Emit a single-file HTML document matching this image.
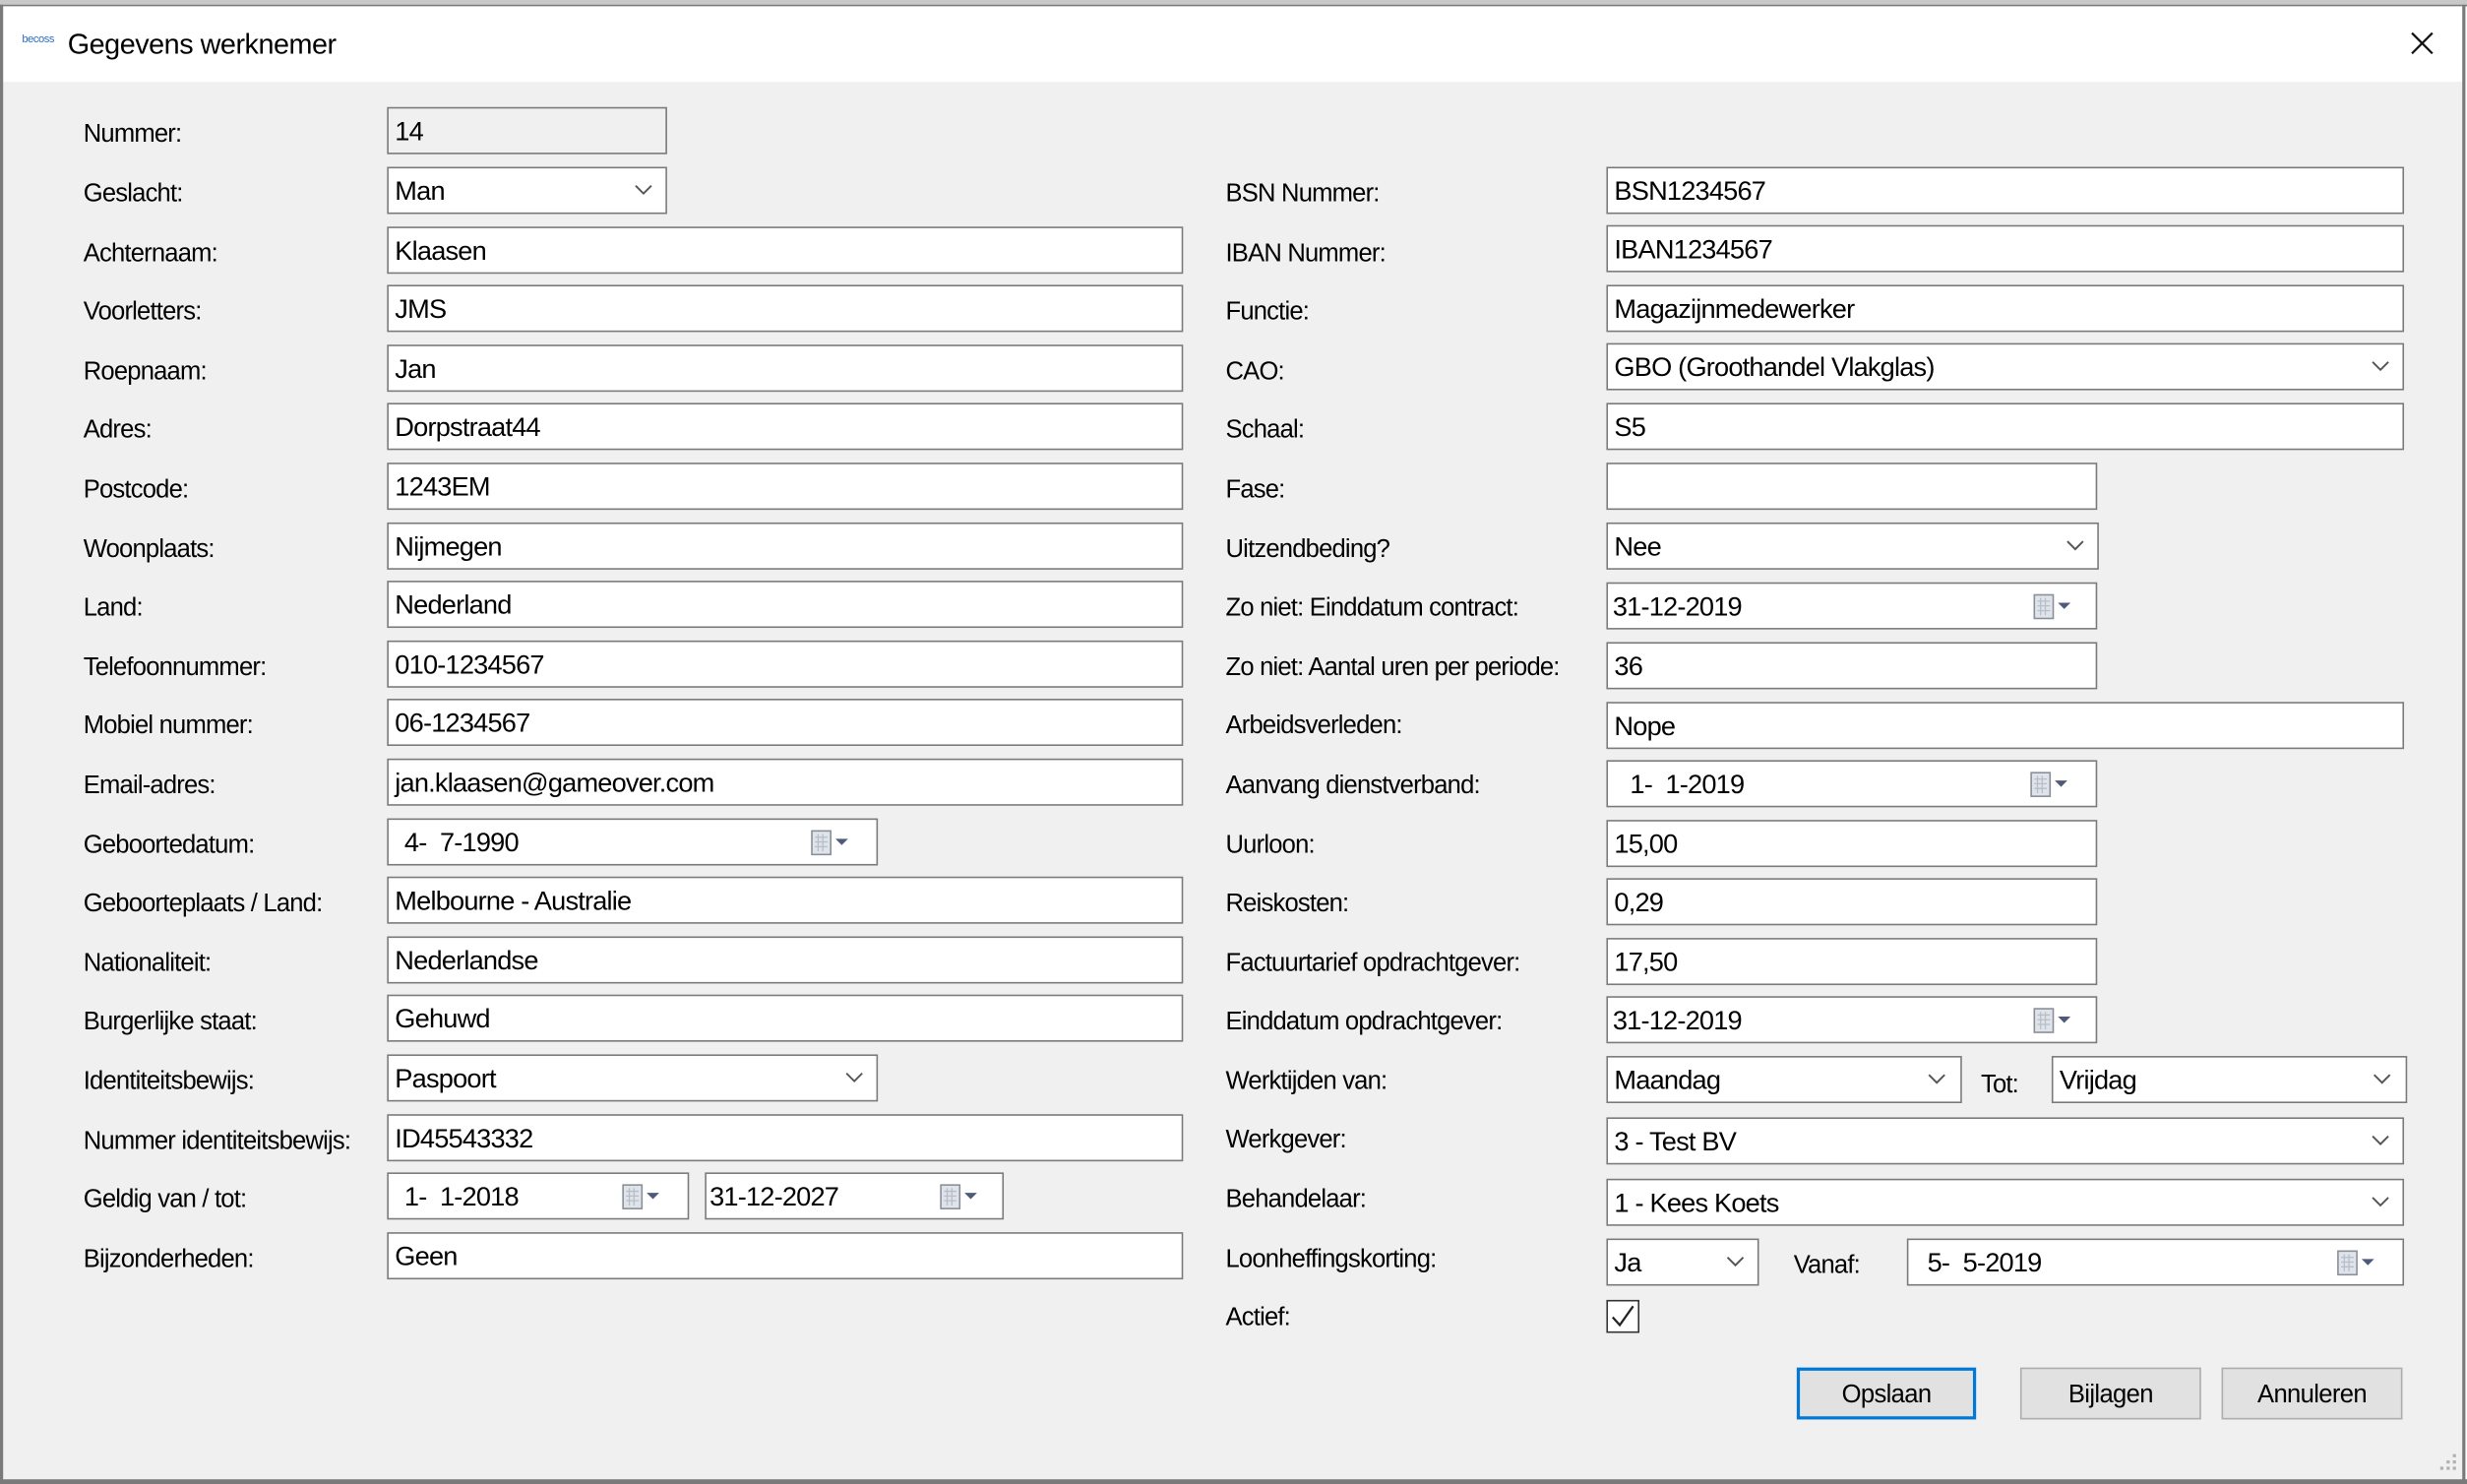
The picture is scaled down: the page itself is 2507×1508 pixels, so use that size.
<!DOCTYPE html>
<html><head><meta charset="utf-8"><style>
html,body{margin:0;padding:0;width:2507px;height:1508px;overflow:hidden;background:#fff}
#s{position:absolute;left:0;top:0;width:1568px;height:943px;transform:scale(1.59885,1.59915);transform-origin:0 0;font-family:"Liberation Sans",sans-serif;color:#000}
.a{position:absolute}
.l{position:absolute;font-size:16px;letter-spacing:-0.5px;line-height:20px;white-space:nowrap;margin-top:2px}
.i{position:absolute;height:28px;background:#fff;border:1px solid #7a7a7a;box-sizing:content-box;font-size:17px;letter-spacing:-0.5px;line-height:30px;padding-left:4px;white-space:nowrap;overflow:hidden}
.i svg{position:absolute;top:0}
.b{position:absolute;height:31px;background:#e1e1e1;border:1px solid #adadad;font-size:16px;letter-spacing:-0.4px;line-height:33px;text-align:center}
</style></head><body><div id="s">
<div class="a" style="left:0;top:0;width:1568px;height:4px;background:#c8c8c8"></div>
<div class="a" style="left:0;top:3px;width:1568px;height:1px;background:#7a7a7a"></div>
<div class="a" style="left:0;top:4px;width:1566px;height:48px;background:#fff"></div>
<div class="a" style="left:0;top:52px;width:1566px;height:888px;background:#f0f0f0"></div>
<div class="a" style="left:0;top:3px;width:2px;height:939px;background:#7a7a7a"></div>
<div class="a" style="left:1565px;top:3px;width:2px;height:939px;background:#7a7a7a"></div>
<div class="a" style="left:0;top:940px;width:1568px;height:3px;background:#7a7a7a"></div>
<div class="a" style="left:14px;top:22px;font-size:7px;color:#2a6fc9;letter-spacing:-0.3px">becoss</div>
<div class="a" style="left:43px;top:18px;font-size:18px;letter-spacing:-0.3px">Gegevens werknemer</div>
<svg class="a" style="left:1532px;top:20px" width="15" height="15"><path d="M1 1L14 14M14 1L1 14" stroke="#111" stroke-width="1.4"/></svg>

<div class="l" style="left:53px;top:74px">Nummer:</div>
<div class="l" style="left:53px;top:112px">Geslacht:</div>
<div class="l" style="left:53px;top:150px">Achternaam:</div>
<div class="l" style="left:53px;top:187px">Voorletters:</div>
<div class="l" style="left:53px;top:225px">Roepnaam:</div>
<div class="l" style="left:53px;top:262px">Adres:</div>
<div class="l" style="left:53px;top:300px">Postcode:</div>
<div class="l" style="left:53px;top:338px">Woonplaats:</div>
<div class="l" style="left:53px;top:375px">Land:</div>
<div class="l" style="left:53px;top:413px">Telefoonnummer:</div>
<div class="l" style="left:53px;top:450px">Mobiel nummer:</div>
<div class="l" style="left:53px;top:488px">Email-adres:</div>
<div class="l" style="left:53px;top:526px">Geboortedatum:</div>
<div class="l" style="left:53px;top:563px">Geboorteplaats / Land:</div>
<div class="l" style="left:53px;top:601px">Nationaliteit:</div>
<div class="l" style="left:53px;top:638px">Burgerlijke staat:</div>
<div class="l" style="left:53px;top:676px">Identiteitsbewijs:</div>
<div class="l" style="left:53px;top:714px">Nummer identiteitsbewijs:</div>
<div class="l" style="left:53px;top:751px">Geldig van / tot:</div>
<div class="l" style="left:53px;top:789px">Bijzonderheden:</div>

<div class="i" style="left:246px;top:68px;width:172px;background:#f0f0f0">14</div>
<div class="i" style="left:246px;top:106px;width:172px">Man<svg style="left:155px" width="16" height="28"><path d="M2 11L7 16L12 11" fill="none" stroke="#555" stroke-width="1.2"/></svg></div>
<div class="i" style="left:246px;top:144px;width:500px">Klaasen</div>
<div class="i" style="left:246px;top:181px;width:500px">JMS</div>
<div class="i" style="left:246px;top:219px;width:500px">Jan</div>
<div class="i" style="left:246px;top:256px;width:500px">Dorpstraat44</div>
<div class="i" style="left:246px;top:294px;width:500px">1243EM</div>
<div class="i" style="left:246px;top:332px;width:500px">Nijmegen</div>
<div class="i" style="left:246px;top:369px;width:500px">Nederland</div>
<div class="i" style="left:246px;top:407px;width:500px">010-1234567</div>
<div class="i" style="left:246px;top:444px;width:500px">06-1234567</div>
<div class="i" style="left:246px;top:482px;width:500px">jan.klaasen@gameover.com</div>
<div class="i" style="left:246px;top:520px;padding-left:10px;width:300px">4-&nbsp; 7-1990<svg style="left:268px" width="30" height="28"><rect x="1" y="7" width="12" height="15" fill="#dfe3ea" stroke="#8a8f98"/><path d="M3 11H11M3 14H11M3 17H11M5 9V20M8 9V20" stroke="#b8bec8" stroke-width="0.8"/><path d="M16 12H24L20 16Z" fill="#4d5b78"/></svg></div>
<div class="i" style="left:246px;top:557px;width:500px">Melbourne - Australie</div>
<div class="i" style="left:246px;top:595px;width:500px">Nederlandse</div>
<div class="i" style="left:246px;top:632px;width:500px">Gehuwd</div>
<div class="i" style="left:246px;top:670px;width:306px">Paspoort<svg style="left:289px" width="16" height="28"><path d="M2 11L7 16L12 11" fill="none" stroke="#555" stroke-width="1.2"/></svg></div>
<div class="i" style="left:246px;top:708px;width:500px">ID45543332</div>
<div class="i" style="left:246px;top:745px;width:180px;padding-left:10px">1-&nbsp; 1-2018<svg style="left:148px" width="30" height="28"><rect x="1" y="7" width="12" height="15" fill="#dfe3ea" stroke="#8a8f98"/><path d="M3 11H11M3 14H11M3 17H11M5 9V20M8 9V20" stroke="#b8bec8" stroke-width="0.8"/><path d="M16 12H24L20 16Z" fill="#4d5b78"/></svg></div>
<div class="i" style="left:448px;top:745px;width:186px;padding-left:2px">31-12-2027<svg style="left:148px" width="30" height="28"><rect x="1" y="7" width="12" height="15" fill="#dfe3ea" stroke="#8a8f98"/><path d="M3 11H11M3 14H11M3 17H11M5 9V20M8 9V20" stroke="#b8bec8" stroke-width="0.8"/><path d="M16 12H24L20 16Z" fill="#4d5b78"/></svg></div>
<div class="i" style="left:246px;top:783px;width:500px">Geen</div>

<div class="l" style="left:779px;top:112px">BSN Nummer:</div>
<div class="l" style="left:779px;top:150px">IBAN Nummer:</div>
<div class="l" style="left:779px;top:187px">Functie:</div>
<div class="l" style="left:779px;top:225px">CAO:</div>
<div class="l" style="left:779px;top:262px">Schaal:</div>
<div class="l" style="left:779px;top:300px">Fase:</div>
<div class="l" style="left:779px;top:338px">Uitzendbeding?</div>
<div class="l" style="left:779px;top:375px">Zo niet: Einddatum contract:</div>
<div class="l" style="left:779px;top:413px">Zo niet: Aantal uren per periode:</div>
<div class="l" style="left:779px;top:450px">Arbeidsverleden:</div>
<div class="l" style="left:779px;top:488px">Aanvang dienstverband:</div>
<div class="l" style="left:779px;top:526px">Uurloon:</div>
<div class="l" style="left:779px;top:563px">Reiskosten:</div>
<div class="l" style="left:779px;top:601px">Factuurtarief opdrachtgever:</div>
<div class="l" style="left:779px;top:638px">Einddatum opdrachtgever:</div>
<div class="l" style="left:779px;top:676px">Werktijden van:</div>
<div class="l" style="left:1259px;top:678px">Tot:</div>
<div class="l" style="left:779px;top:713px">Werkgever:</div>
<div class="l" style="left:779px;top:751px">Behandelaar:</div>
<div class="l" style="left:779px;top:789px">Loonheffingskorting:</div>
<div class="l" style="left:1140px;top:793px">Vanaf:</div>
<div class="l" style="left:779px;top:826px">Actief:</div>

<div class="i" style="left:1021px;top:106px;width:501px">BSN1234567</div>
<div class="i" style="left:1021px;top:143px;width:501px">IBAN1234567</div>
<div class="i" style="left:1021px;top:181px;width:501px">Magazijnmedewerker</div>
<div class="i" style="left:1021px;top:218px;width:501px">GBO (Groothandel Vlakglas)<svg style="left:484px" width="16" height="28"><path d="M2 11L7 16L12 11" fill="none" stroke="#555" stroke-width="1.2"/></svg></div>
<div class="i" style="left:1021px;top:256px;width:501px">S5</div>
<div class="i" style="left:1021px;top:294px;width:306px"></div>
<div class="i" style="left:1021px;top:332px;width:307px">Nee<svg style="left:290px" width="16" height="28"><path d="M2 11L7 16L12 11" fill="none" stroke="#555" stroke-width="1.2"/></svg></div>
<div class="i" style="left:1021px;top:370px;width:307px;padding-left:3px">31-12-2019<svg style="left:270px" width="30" height="28"><rect x="1" y="7" width="12" height="15" fill="#dfe3ea" stroke="#8a8f98"/><path d="M3 11H11M3 14H11M3 17H11M5 9V20M8 9V20" stroke="#b8bec8" stroke-width="0.8"/><path d="M16 12H24L20 16Z" fill="#4d5b78"/></svg></div>
<div class="i" style="left:1021px;top:408px;width:306px">36</div>
<div class="i" style="left:1021px;top:446px;width:501px">Nope</div>
<div class="i" style="left:1021px;top:483px;width:296px;padding-left:14px">1-&nbsp; 1-2019<svg style="left:268px" width="30" height="28"><rect x="1" y="7" width="12" height="15" fill="#dfe3ea" stroke="#8a8f98"/><path d="M3 11H11M3 14H11M3 17H11M5 9V20M8 9V20" stroke="#b8bec8" stroke-width="0.8"/><path d="M16 12H24L20 16Z" fill="#4d5b78"/></svg></div>
<div class="i" style="left:1021px;top:521px;width:306px">15,00</div>
<div class="i" style="left:1021px;top:558px;width:306px">0,29</div>
<div class="i" style="left:1021px;top:596px;width:306px">17,50</div>
<div class="i" style="left:1021px;top:633px;width:307px;padding-left:3px">31-12-2019<svg style="left:270px" width="30" height="28"><rect x="1" y="7" width="12" height="15" fill="#dfe3ea" stroke="#8a8f98"/><path d="M3 11H11M3 14H11M3 17H11M5 9V20M8 9V20" stroke="#b8bec8" stroke-width="0.8"/><path d="M16 12H24L20 16Z" fill="#4d5b78"/></svg></div>
<div class="i" style="left:1021px;top:671px;width:220px">Maandag<svg style="left:202px" width="16" height="28"><path d="M2 11L7 16L12 11" fill="none" stroke="#555" stroke-width="1.2"/></svg></div>
<div class="i" style="left:1304px;top:671px;width:220px">Vrijdag<svg style="left:202px" width="16" height="28"><path d="M2 11L7 16L12 11" fill="none" stroke="#555" stroke-width="1.2"/></svg></div>
<div class="i" style="left:1021px;top:710px;width:501px">3 - Test BV<svg style="left:484px" width="16" height="28"><path d="M2 11L7 16L12 11" fill="none" stroke="#555" stroke-width="1.2"/></svg></div>
<div class="i" style="left:1021px;top:749px;width:501px">1 - Kees Koets<svg style="left:484px" width="16" height="28"><path d="M2 11L7 16L12 11" fill="none" stroke="#555" stroke-width="1.2"/></svg></div>
<div class="i" style="left:1021px;top:787px;width:91px">Ja<svg style="left:74px" width="16" height="28"><path d="M2 11L7 16L12 11" fill="none" stroke="#555" stroke-width="1.2"/></svg></div>
<div class="i" style="left:1212px;top:787px;width:302px;padding-left:12px">5-&nbsp; 5-2019<svg style="left:272px" width="30" height="28"><rect x="1" y="7" width="12" height="15" fill="#dfe3ea" stroke="#8a8f98"/><path d="M3 11H11M3 14H11M3 17H11M5 9V20M8 9V20" stroke="#b8bec8" stroke-width="0.8"/><path d="M16 12H24L20 16Z" fill="#4d5b78"/></svg></div>
<div class="a" style="left:1021px;top:826px;width:19px;height:19px;background:#fff;border:1px solid #333"></div>
<svg class="a" style="left:1021px;top:826px" width="21" height="21"><path d="M4 11L8.5 16L17 4" fill="none" stroke="#222" stroke-width="1.4"/></svg>

<div class="b" style="left:1142px;top:869px;width:110px;border:2px solid #0078d7;height:29px;line-height:31px">Opslaan</div>
<div class="b" style="left:1284px;top:869px;width:113px">Bijlagen</div>
<div class="b" style="left:1412px;top:869px;width:113px">Annuleren</div>
<svg class="a" style="left:1549px;top:922px" width="14" height="14"><g fill="#b0b0b0"><rect x="10" y="2" width="2" height="2"/><rect x="10" y="6" width="2" height="2"/><rect x="6" y="6" width="2" height="2"/><rect x="10" y="10" width="2" height="2"/><rect x="6" y="10" width="2" height="2"/><rect x="2" y="10" width="2" height="2"/></g></svg>
</div></body></html>
